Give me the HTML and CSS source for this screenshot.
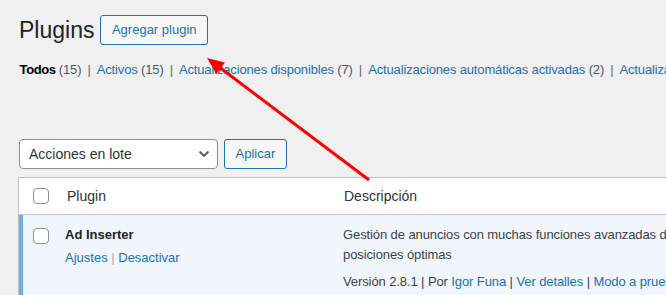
FILE: index.html
```html
<!DOCTYPE html>
<html lang="es">
<head>
    <meta charset="UTF-8">
    <meta name="viewport" content="width=device-width, initial-scale=1.0">
    <title>Plugins</title>
    <link rel="stylesheet" href="styles.css">
</head>
<body>
    <div class="wrap">
        <div class="page-head">
            <h1>Plugins</h1>
            <a href="#" class="button">Agregar plugin</a>
        </div>

        <ul class="subsubsub">
            <li><a href="#" class="current">Todos <span class="count">(15)</span></a> |</li>
            <li><a href="#">Activos <span class="count">(15)</span></a> |</li>
            <li><a href="#">Actualizaciones disponibles <span class="count">(7)</span></a> |</li>
            <li><a href="#">Actualizaciones automáticas activadas <span class="count">(2)</span></a> |</li>
            <li><a href="#">Actualizaciones automáticas desactivadas <span class="count">(13)</span></a></li>
        </ul>

        <div class="tablenav">
            <div class="bulk-select">
                <span>Acciones en lote</span>
                <svg width="12" height="8" viewBox="0 0 12 8"><polyline points="1.5,1.5 6,6 10.5,1.5" fill="none" stroke="#50575e" stroke-width="1.8"/></svg>
            </div>
            <button class="button">Aplicar</button>
        </div>

        <div class="plugins-table">
            <div class="table-row table-head">
                <div class="cell check-cell"><span class="checkbox"></span></div>
                <div class="cell name-cell">Plugin</div>
                <div class="cell desc-cell">Descripción</div>
            </div>
            <div class="table-row active">
                <div class="cell check-cell"><span class="checkbox"></span></div>
                <div class="cell name-cell">
                    <strong>Ad Inserter</strong>
                    <div class="row-actions"><a href="#">Ajustes</a> | <a href="#">Desactivar</a></div>
                </div>
                <div class="cell desc-cell">
                    <p class="description">Gestión de anuncios con muchas funciones avanzadas de publicidad para insertar anuncios en posiciones óptimas</p>
                    <p class="version">Versión 2.8.1 | Por <a href="#">Igor Funa</a> | <a href="#">Ver detalles</a> | <a href="#">Modo a prueba de fallos</a></p>
                </div>
            </div>
        </div>
    </div>

    <svg class="annotation" width="666" height="295" viewBox="0 0 666 295">
        <line x1="369" y1="180" x2="219" y2="67" stroke="#ff0000" stroke-width="3"/>
        <polygon points="207,58 225,62.6 216.4,74" fill="#ff0000"/>
    </svg>
</body>
</html>
```

FILE: styles.css
```css
body {
    margin: 0;
    background-color: #f0f0f1;
    font-family: "Liberation Sans", Arial, sans-serif;
    font-size: 13px;
    color: #3c434a;
    overflow: hidden;
    position: relative;
    width: 666px;
    height: 295px;
}

a {
    color: #2271b1;
    text-decoration: none;
}

.wrap {
    margin-left: 19px;
    padding-top: 15px;
}

.page-head {
    display: flex;
    align-items: center;
}

.page-head h1 {
    margin: 0 6px 0 0;
    font-size: 23px;
    font-weight: 400;
    line-height: 29px;
    color: #1d2327;
}

.button {
    display: inline-block;
    height: 30px;
    box-sizing: border-box;
    padding: 0 10.5px;
    border: 1px solid #2271b1;
    border-radius: 3px;
    background-color: #f6f7f7;
    color: #2271b1;
    font-family: inherit;
    font-size: 13px;
    line-height: 28px;
}

.subsubsub {
    list-style: none;
    margin: 12px 0 0 -2px;
    padding: 0;
    white-space: nowrap;
    line-height: 26px;
    color: #646970;
    letter-spacing: -0.15px;
}

.subsubsub li {
    display: inline;
}

.subsubsub a {
    padding: 0 0.2em;
}

.subsubsub a.current {
    color: #000;
    font-weight: 600;
    letter-spacing: -0.4px;
}

.subsubsub .count {
    color: #50575e;
    font-weight: 400;
    letter-spacing: -0.15px;
}

.tablenav {
    display: flex;
    gap: 6px;
    margin-top: 56px;
}

.bulk-select {
    display: flex;
    align-items: center;
    justify-content: space-between;
    width: 199px;
    height: 30px;
    box-sizing: border-box;
    padding: 0 7px 0 9px;
    border: 1px solid #8c8f94;
    border-radius: 4px;
    background-color: #fff;
    color: #2c3338;
    font-size: 14px;
}

.plugins-table {
    margin: 8px 0 0 -1px;
    width: 900px;
    border: 1px solid #c3c4c7;
    background-color: #fff;
}

.table-row {
    display: grid;
    grid-template-columns: 37px 277px 1fr;
}

.table-head {
    height: 36px;
    align-items: center;
    border-bottom: 1px solid #c3c4c7;
    font-size: 14px;
    color: #2c3338;
}

.table-head .check-cell {
    padding-left: 14px;
    display: flex;
}

.table-head .name-cell,
.table-head .desc-cell {
    padding-left: 11px;
}

.checkbox {
    display: block;
    width: 16px;
    height: 16px;
    box-sizing: border-box;
    border: 1px solid #8c8f94;
    border-radius: 4px;
    background-color: #fff;
}

.table-row.active {
    background-color: #f0f6fc;
    line-height: 19.5px;
}

.active .check-cell {
    border-left: 4px solid #72aee6;
    padding: 13px 0 0 10px;
}

.active .name-cell {
    padding: 10px 9px 8px;
}

.active .name-cell strong {
    color: #1d2327;
}

.row-actions {
    margin-top: 3px;
    color: #a7aaad;
}

.active .desc-cell {
    padding: 10px 10px 8px;
    letter-spacing: -0.1px;
}

.description {
    margin: 0;
    width: 570px;
}

.version {
    margin: 8px 0 0;
    white-space: nowrap;
}

.annotation {
    position: absolute;
    top: 0;
    left: 0;
    pointer-events: none;
}
```
